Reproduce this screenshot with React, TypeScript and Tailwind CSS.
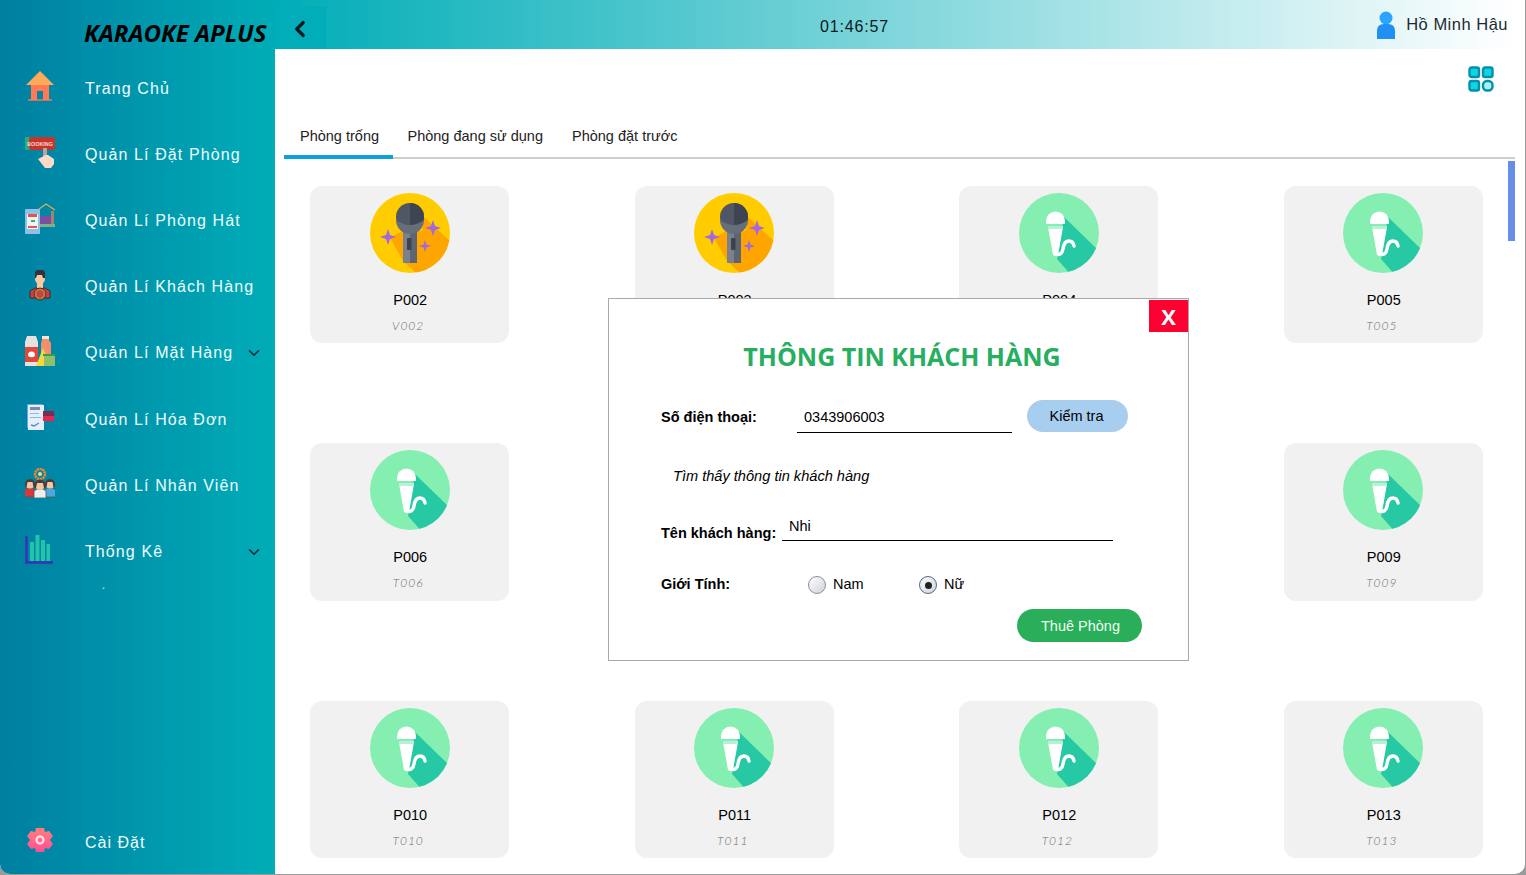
import React from "react";
import { ChevronDown, ChevronLeft } from "lucide-react";

const HomeIcon = () => (
  <svg width="30" height="30" viewBox="0 0 30 30">
    <rect x="3" y="28" width="24" height="2" fill="#b87a6a" />
    <path d="M6 13h18v16h-6v-9h-6v9H6z" fill="#ff7a55" />
    <path d="M15 0L29 14H1z" fill="#ffa95a" />
  </svg>
);
const BookIcon = () => (
  <svg width="30" height="32" viewBox="0 0 30 32">
    <rect x="0" y="1" width="8" height="13" rx="1" fill="#27ae78" />
    <rect x="4" y="1" width="26" height="13" rx="2" fill="#c9342a" />
    <text x="2" y="10" fontSize="6" fontFamily="Liberation Sans" fontWeight="700" fill="#f4d9d0" textLength="26" lengthAdjust="spacingAndGlyphs">BOOKING</text>
    <rect x="18" y="12" width="4" height="10" fill="#b8a3a0" />
    <path d="M13 23l6-3 1-1h3l6 4v5l-3 4h-6z" fill="#ffd9c8" />
  </svg>
);
const RoomIcon = () => (
  <svg width="30" height="31" viewBox="0 0 30 31">
    <path d="M10 9L21 1l9 6" fill="none" stroke="#d6b14a" strokeWidth="1.4" />
    <rect x="14" y="13" width="15" height="9" fill="#7b4fa0" />
    <rect x="26" y="8" width="3" height="15" fill="#a5826a" />
    <rect x="12" y="21" width="18" height="3" fill="#7fb08a" />
    <rect x="0" y="6" width="15" height="25" rx="1" fill="#8fc0e8" />
    <rect x="2" y="11" width="11" height="15" fill="#eef3f7" />
    <rect x="3" y="11" width="9" height="3" fill="#e25548" />
    <rect x="6" y="17" width="4" height="2" fill="#4aa86a" />
    <rect x="3" y="23" width="9" height="2" fill="#e25548" />
  </svg>
);
const CustomerIcon = () => (
  <svg width="30" height="32" viewBox="0 0 30 32">
    <path d="M5 29v-7l5-3h10l5 3v7z" fill="#c4424a" stroke="#3d2a2a" strokeWidth="1" />
    <circle cx="15" cy="10" r="5" fill="#f6c9a0" />
    <path d="M10 9V3l2-2h6l2 2v6h-2l-1-3h-5l-1 3z" fill="#33323a" />
    <rect x="12" y="14" width="6" height="5" fill="#f6c9a0" />
    <circle cx="15" cy="25" r="4.500" fill="none" stroke="#c87a28" strokeWidth="2.200" />
    <circle cx="15" cy="25" r="6" fill="none" stroke="#3d2a2a" strokeWidth="0.8" />
  </svg>
);
const GoodsIcon = () => (
  <svg width="30" height="30" viewBox="0 0 30 30">
    <path d="M2 0h9l2 6v24H0V6z" fill="#e6e3df" />
    <rect x="0" y="11" width="13" height="15" fill="#e0493a" />
    <path d="M3 19a3.500 3.500 0 1 1 7 0c0 3-7 3-7 0z" fill="#fff" />
    <path d="M17 0h7v4l2 3v12h-10V7l1-3z" fill="#f2906e" />
    <rect x="17" y="0" width="7" height="3" fill="#f6e8d8" />
    <path d="M18 12l7 18H11z" fill="#f2d83a" />
    <rect x="19" y="19" width="11" height="11" fill="#8cc06a" />
    <rect x="18" y="18" width="12" height="2" fill="#3f9a4e" />
  </svg>
);
const BillIcon = () => (
  <svg width="30" height="30" viewBox="0 0 30 30">
    <rect x="2" y="2" width="16" height="24" rx="1" fill="#6aa5e8" />
    <rect x="3" y="3" width="16" height="25" fill="#e6eefa" />
    <rect x="5" y="5" width="10" height="3" fill="#7a8aa8" />
    <rect x="5" y="11" width="9" height="1" fill="#8fb8e8" />
    <rect x="5" y="15" width="11" height="1" fill="#8fb8e8" />
    <path d="M6 23l3 1 5-3" stroke="#4a88e0" strokeWidth="1.4" fill="none" />
    <rect x="18" y="9" width="11" height="5" fill="#7a2c52" />
    <rect x="18" y="14" width="11" height="5" fill="#e8264e" />
  </svg>
);
const StaffIcon = () => {
  const person = (x: number, y: number, shirt: string, r: number) => (
    <g>
      <path d={`M${x - r - 1} ${y + 17}v-7l3-2h${2 * r - 4}l3 2v7z`} fill={shirt} stroke="#555" strokeWidth="0.8" />
      <circle cx={x} cy={y + 4} r={r} fill="#f2c8a0" />
      <path d={`M${x - r - 0.5} ${y + 7}v-3a${r + 0.5} ${r + 0.5} 0 0 1 ${2 * r + 1} 0v3h-1.500l-1-5h-${2 * r - 4}l-1 5z`} fill="#4a3a3a" />
    </g>
  );
  return (
    <svg width="30" height="30" viewBox="0 0 30 30">
      <circle cx="15" cy="6" r="5" fill="none" stroke="#e8872e" strokeWidth="2.600" strokeDasharray="2.200 0.600" />
      <circle cx="15" cy="6" r="2" fill="#f2d8a8" />
      {person(5, 12, "#d8383a", 4.5)}
      {person(25, 12, "#4aa8dc", 4.5)}
      {person(15, 13, "#eeeeee", 5)}
    </svg>
  );
};
const ChartIcon = () => (
  <svg width="30" height="30" viewBox="0 0 30 30">
    <rect x="5" y="8" width="4" height="19" fill="#22c4ac" />
    <rect x="10.500" y="1" width="4" height="26" fill="#22c4ac" />
    <rect x="16" y="6" width="4" height="21" fill="#22c4ac" />
    <rect x="21.500" y="10" width="3.500" height="17" fill="#22c4ac" />
    <path d="M1.500 2v26.500H28" fill="none" stroke="#3a2fb8" strokeWidth="2.400" />
  </svg>
);
const GearIcon = () => (
  <svg width="26" height="26" viewBox="0 0 26 26">
    <defs>
      <linearGradient id="g" x1="0" y1="0" x2="0" y2="1">
        <stop offset="0" stopColor="#ff7f7a" />
        <stop offset="1" stopColor="#ff4f96" />
      </linearGradient>
    </defs>
    <path d="M9 1h8l1 4 4-1 4 5-3 4 3 4-4 5-4-1-1 4H9l-1-4-4 1-4-5 3-4-3-4 4-5 4 1z" fill="url(#g)" />
    <circle cx="13" cy="13" r="3.500" fill="none" stroke="#ffd5dc" strokeWidth="2.500" />
  </svg>
);
const UserIcon = () => (
  <svg width="18" height="28" viewBox="0 0 18 28">
    <circle cx="9" cy="7" r="6.500" fill="#2aa5ff" />
    <path d="M0 28v-8q0-7 7-7h4q7 0 7 7v8z" fill="#2090f5" />
  </svg>
);
const GridIcon = () => (
  <svg width="26" height="26" viewBox="0 0 26 26">
    <rect x="1.500" y="1.500" width="9.500" height="9.500" rx="2" fill="#10d4e0" stroke="#0590ad" strokeWidth="2.400" />
    <rect x="15" y="1.500" width="9.500" height="9.500" rx="2" fill="#10d4e0" stroke="#0590ad" strokeWidth="2.400" />
    <rect x="1.500" y="15" width="9.500" height="9.500" rx="2" fill="#10d4e0" stroke="#0590ad" strokeWidth="2.400" />
    <rect x="15" y="15" width="9.500" height="9.500" rx="4" fill="#a8f2f0" stroke="#0590ad" strokeWidth="2.400" />
  </svg>
);

const YellowMic = () => (
  <svg width="80" height="80" viewBox="0 0 80 80">
    <defs>
      <clipPath id="cy"><circle cx="40" cy="40" r="40" /></clipPath>
    </defs>
    <circle cx="40" cy="40" r="40" fill="#ffcc00" />
    <path d="M54 24L80 48V80H46L33 68L20 45L32 38H52z" fill="#ffa500" clipPath="url(#cy)" />
    <path d="M33 36h7v34h-7z" fill="#7a808c" />
    <path d="M40 36h7v34h-7z" fill="#5d6472" />
    <rect x="37" y="45" width="4.500" height="12" rx="1" fill="#3c4350" />
    <circle cx="40" cy="24" r="14" fill="#4f5664" />
    <path d="M40 10a14 14 0 0 1 0 28z" fill="#3e4552" />
    <path d="M26 27q14 10 28 0a14 14 0 0 1-28 0z" fill="#666d7b" />
    <path d="M18 36l2 6 6 2-6 2-2 6-2-6-6-2 6-2zM63 27l2 6 6 2-6 2-2 6-2-6-6-2 6-2zM55 47l1.400 4.600L61 53l-4.600 1.400L55 59l-1.400-4.600L49 53l4.600-1.400z" fill="#a268e0" />
  </svg>
);
const GreenMic = () => (
  <svg width="80" height="80" viewBox="0 0 80 80">
    <defs>
      <clipPath id="cg"><circle cx="40" cy="40" r="40" /></clipPath>
    </defs>
    <circle cx="40" cy="40" r="40" fill="#84efb0" />
    <path d="M45 24L82 60L54 84L38 66z" fill="#26c9a3" clipPath="url(#cg)" />
    <path d="M29 34h15l-5 28h-5z" fill="#fff" />
    <rect x="29" y="33" width="15" height="3" fill="#b8f0dc" />
    <path d="M27 28a9.500 9.500 0 0 1 19 0v3H27z" fill="#fff" />
    <path d="M36 61q7 2 8-5q1-8 6-8q4 0 5 5" fill="none" stroke="#fff" strokeWidth="3.400" strokeLinecap="round" />
  </svg>
);

const Row = ({ icon, label, chevron }: { icon: React.ReactNode; label: string; chevron?: boolean }) => (
  <div className="flex h-[66.2px] items-center pl-[25px] pr-[12px]">
    <div className="-mt-[5px] flex h-[32px] w-[30px] shrink-0 items-center justify-center">{icon}</div>
    <span className="ml-[30px] flex-1 whitespace-nowrap text-[16px] tracking-[1.100px] text-[#effcff]">{label}</span>
    {chevron && <ChevronDown size={18} strokeWidth={2} className="text-[#0d2433]" />}
  </div>
);

const Card = ({ name, code, used }: { name: string; code: string; used?: boolean }) => (
  <div className="flex h-[157.25px] flex-col items-center rounded-[12px] bg-[#f1f1f1] pt-[7px]">
    {used ? <YellowMic /> : <GreenMic />}
    <div className="mt-[17px] pl-[1px] text-[14.500px] leading-[20px] text-black">{name}</div>
    <div className="mt-[9px] pr-[3px] font-['Lato',sans-serif] text-[12px] font-light italic leading-[14px] tracking-[1px] text-[#6f6f6f]">{code}</div>
  </div>
);

const Radio = ({ on }: { on?: boolean }) => (
  <span className={`flex h-[18px] w-[18px] items-center justify-center rounded-full border bg-gradient-to-br from-white to-[#cfd3d8] ${on ? "border-[#4a6a8a]" : "border-[#8a8f96]"}`}>
    {on && <span className="h-[7px] w-[7px] rounded-full bg-[#222]" />}
  </span>
);

export default function App() {
  const rooms = [
    { name: "P002", code: "V002", used: true },
    { name: "P003", code: "V003", used: true },
    { name: "P004", code: "T004" },
    { name: "P005", code: "T005" },
    { name: "P006", code: "T006" },
    { name: "P007", code: "T007" },
    { name: "P008", code: "T008" },
    { name: "P009", code: "T009" },
    { name: "P010", code: "T010" },
    { name: "P011", code: "T011" },
    { name: "P012", code: "T012" },
    { name: "P013", code: "T013" },
  ];
  return (
    <div className="h-[875px] w-[1526px] overflow-hidden bg-[#9a9a9a] font-['Liberation_Sans',Arial,sans-serif]">
      <div className="relative flex h-[873.5px] w-[1524.5px] overflow-hidden rounded-b-[10px] bg-white">
        <aside className="flex w-[275px] shrink-0 flex-col bg-[linear-gradient(to_right,#007fa1,#00adb7)]">
          <div className="h-[55.5px] pl-[84px] pt-[16px] font-['Open_Sans',sans-serif] text-[24px] font-bold italic leading-[33px] whitespace-nowrap text-black">KARAOKE APLUS</div>
          <Row icon={<HomeIcon />} label="Trang Chủ" />
          <Row icon={<BookIcon />} label="Quản Lí Đặt Phòng" />
          <Row icon={<RoomIcon />} label="Quản Lí Phòng Hát" />
          <Row icon={<CustomerIcon />} label="Quản Lí Khách Hàng" />
          <Row icon={<GoodsIcon />} label="Quản Lí Mặt Hàng" chevron />
          <Row icon={<BillIcon />} label="Quản Lí Hóa Đơn" />
          <Row icon={<StaffIcon />} label="Quản Lí Nhân Viên" />
          <Row icon={<ChartIcon />} label="Thống Kê" chevron />
          <div className="pl-[102px] pt-[3px] text-[10px] leading-[10px] text-white">´</div>
          <div className="mt-auto">
            <div className="flex h-[62px] items-center pl-[27px]">
              <span className="-mt-[5px] flex"><GearIcon /></span>
              <span className="ml-[32px] text-[16px] tracking-[1px] text-[#effcff]">Cài Đặt</span>
            </div>
          </div>
        </aside>

        <main className="flex min-w-0 flex-1 flex-col">
          <header className="mr-[9.500px] flex h-[49px] shrink-0 items-center bg-[linear-gradient(to_right,#00adb7,#ffffff)]">
            <div className="mt-[7px] flex h-[42px] w-[51px] items-center justify-center bg-[#00adb9]">
              <ChevronLeft size={26} strokeWidth={3} className="-ml-[2px] mt-[2px] text-[#0a1a20]" />
            </div>
            <div className="ml-[494px] w-[72px] pt-[4px] text-[16px] tracking-[0.850px] text-[#0a1a20] whitespace-nowrap">01:46:57</div>
            <div className="ml-auto flex items-center pr-[7px]">
              <UserIcon />
              <span className="ml-[11px] text-[16.500px] tracking-[0.500px] text-[#1d2a33]">Hồ Minh Hậu</span>
            </div>
          </header>

          <div className="flex h-[44px] shrink-0 justify-end pr-[31px] pt-[17px]">
            <GridIcon />
          </div>

          <div className="mr-[9.500px] ml-[9px] flex h-[66px] shrink-0 items-end border-b-2 border-[#cdcdcd] text-[14.500px] text-[#222]">
            <div className="-mb-[2px] h-[35px] w-[108.500px] border-b-4 border-[#0e9fe0] pl-[16px] pt-[2px] leading-[20px] whitespace-nowrap">Phòng trống</div>
            <div className="ml-[15px] h-[33px] pt-[2px] leading-[20px] whitespace-nowrap">Phòng đang sử dụng</div>
            <div className="ml-[29px] h-[33px] pt-[2px] leading-[20px] whitespace-nowrap">Phòng đặt trước</div>
          </div>

          <div className="relative min-h-0 flex-1 overflow-hidden">
            <div className="grid grid-cols-4 gap-x-[125.170px] gap-y-[100px] pl-[35px] pr-[41.500px] pt-[27px]">
              {rooms.map((r) => (
                <Card key={r.name} {...r} />
              ))}
            </div>
            <div className="absolute right-[10px] top-[2px] h-[80px] w-[7px] bg-[#668ee8]" />
          </div>
        </main>

        <div className="absolute left-[608px] top-[298px] flex h-[363px] w-[581px] flex-col border border-[#aaaaaa] bg-white pl-[52px] text-[14.500px] text-black">
          <div className="absolute right-0 top-[1px] flex h-[32px] w-[39px] items-center justify-center bg-[#ff0033] pt-[1px] font-['Open_Sans',sans-serif] text-[22px] font-bold text-white">X</div>
          <div className="mt-[39px] -ml-[52px] pl-[7px] text-center font-['Open_Sans',sans-serif] text-[25px] font-bold leading-[36px] whitespace-nowrap text-[#27ae60]">THÔNG TIN KHÁCH HÀNG</div>
          <div className="mt-[26px] flex h-[33px] items-start">
            <span className="w-[136px] pt-[7px] font-bold leading-[20px]">Số điện thoại:</span>
            <span className="flex h-[33px] w-[215px] items-center border-b border-black pl-[7px] pt-[3px]">0343906003</span>
            <span className="ml-[15px] flex h-[32px] w-[101px] items-center justify-center rounded-[16px] bg-[#a7cdef] pr-[2px] pt-[2px]">Kiểm tra</span>
          </div>
          <div className="mt-[33px] pl-[12px] text-[14.600px] italic leading-[20px] whitespace-nowrap">Tìm thấy thông tin khách hàng</div>
          <div className="mt-[30px] flex h-[25px] items-start">
            <span className="w-[121px] pt-[7px] font-bold leading-[20px]">Tên khách hàng:</span>
            <span className="h-[25px] w-[331px] border-b border-black pl-[7px] leading-[20px]">Nhi</span>
          </div>
          <div className="mt-[33px] flex h-[22px] items-center">
            <span className="w-[147px] font-bold">Giới Tính:</span>
            <Radio />
            <span className="ml-[7px] w-[86px]">Nam</span>
            <Radio on />
            <span className="ml-[7px]">Nữ</span>
          </div>
          <div className="mt-[13px] flex justify-end pr-[46px]">
            <span className="flex h-[33px] w-[125px] items-center justify-center rounded-[17px] bg-[#2bae5a] pl-[2px] pt-[3px] text-[#eefdf2]">Thuê Phòng</span>
          </div>
        </div>
      </div>
    </div>
  );
}
